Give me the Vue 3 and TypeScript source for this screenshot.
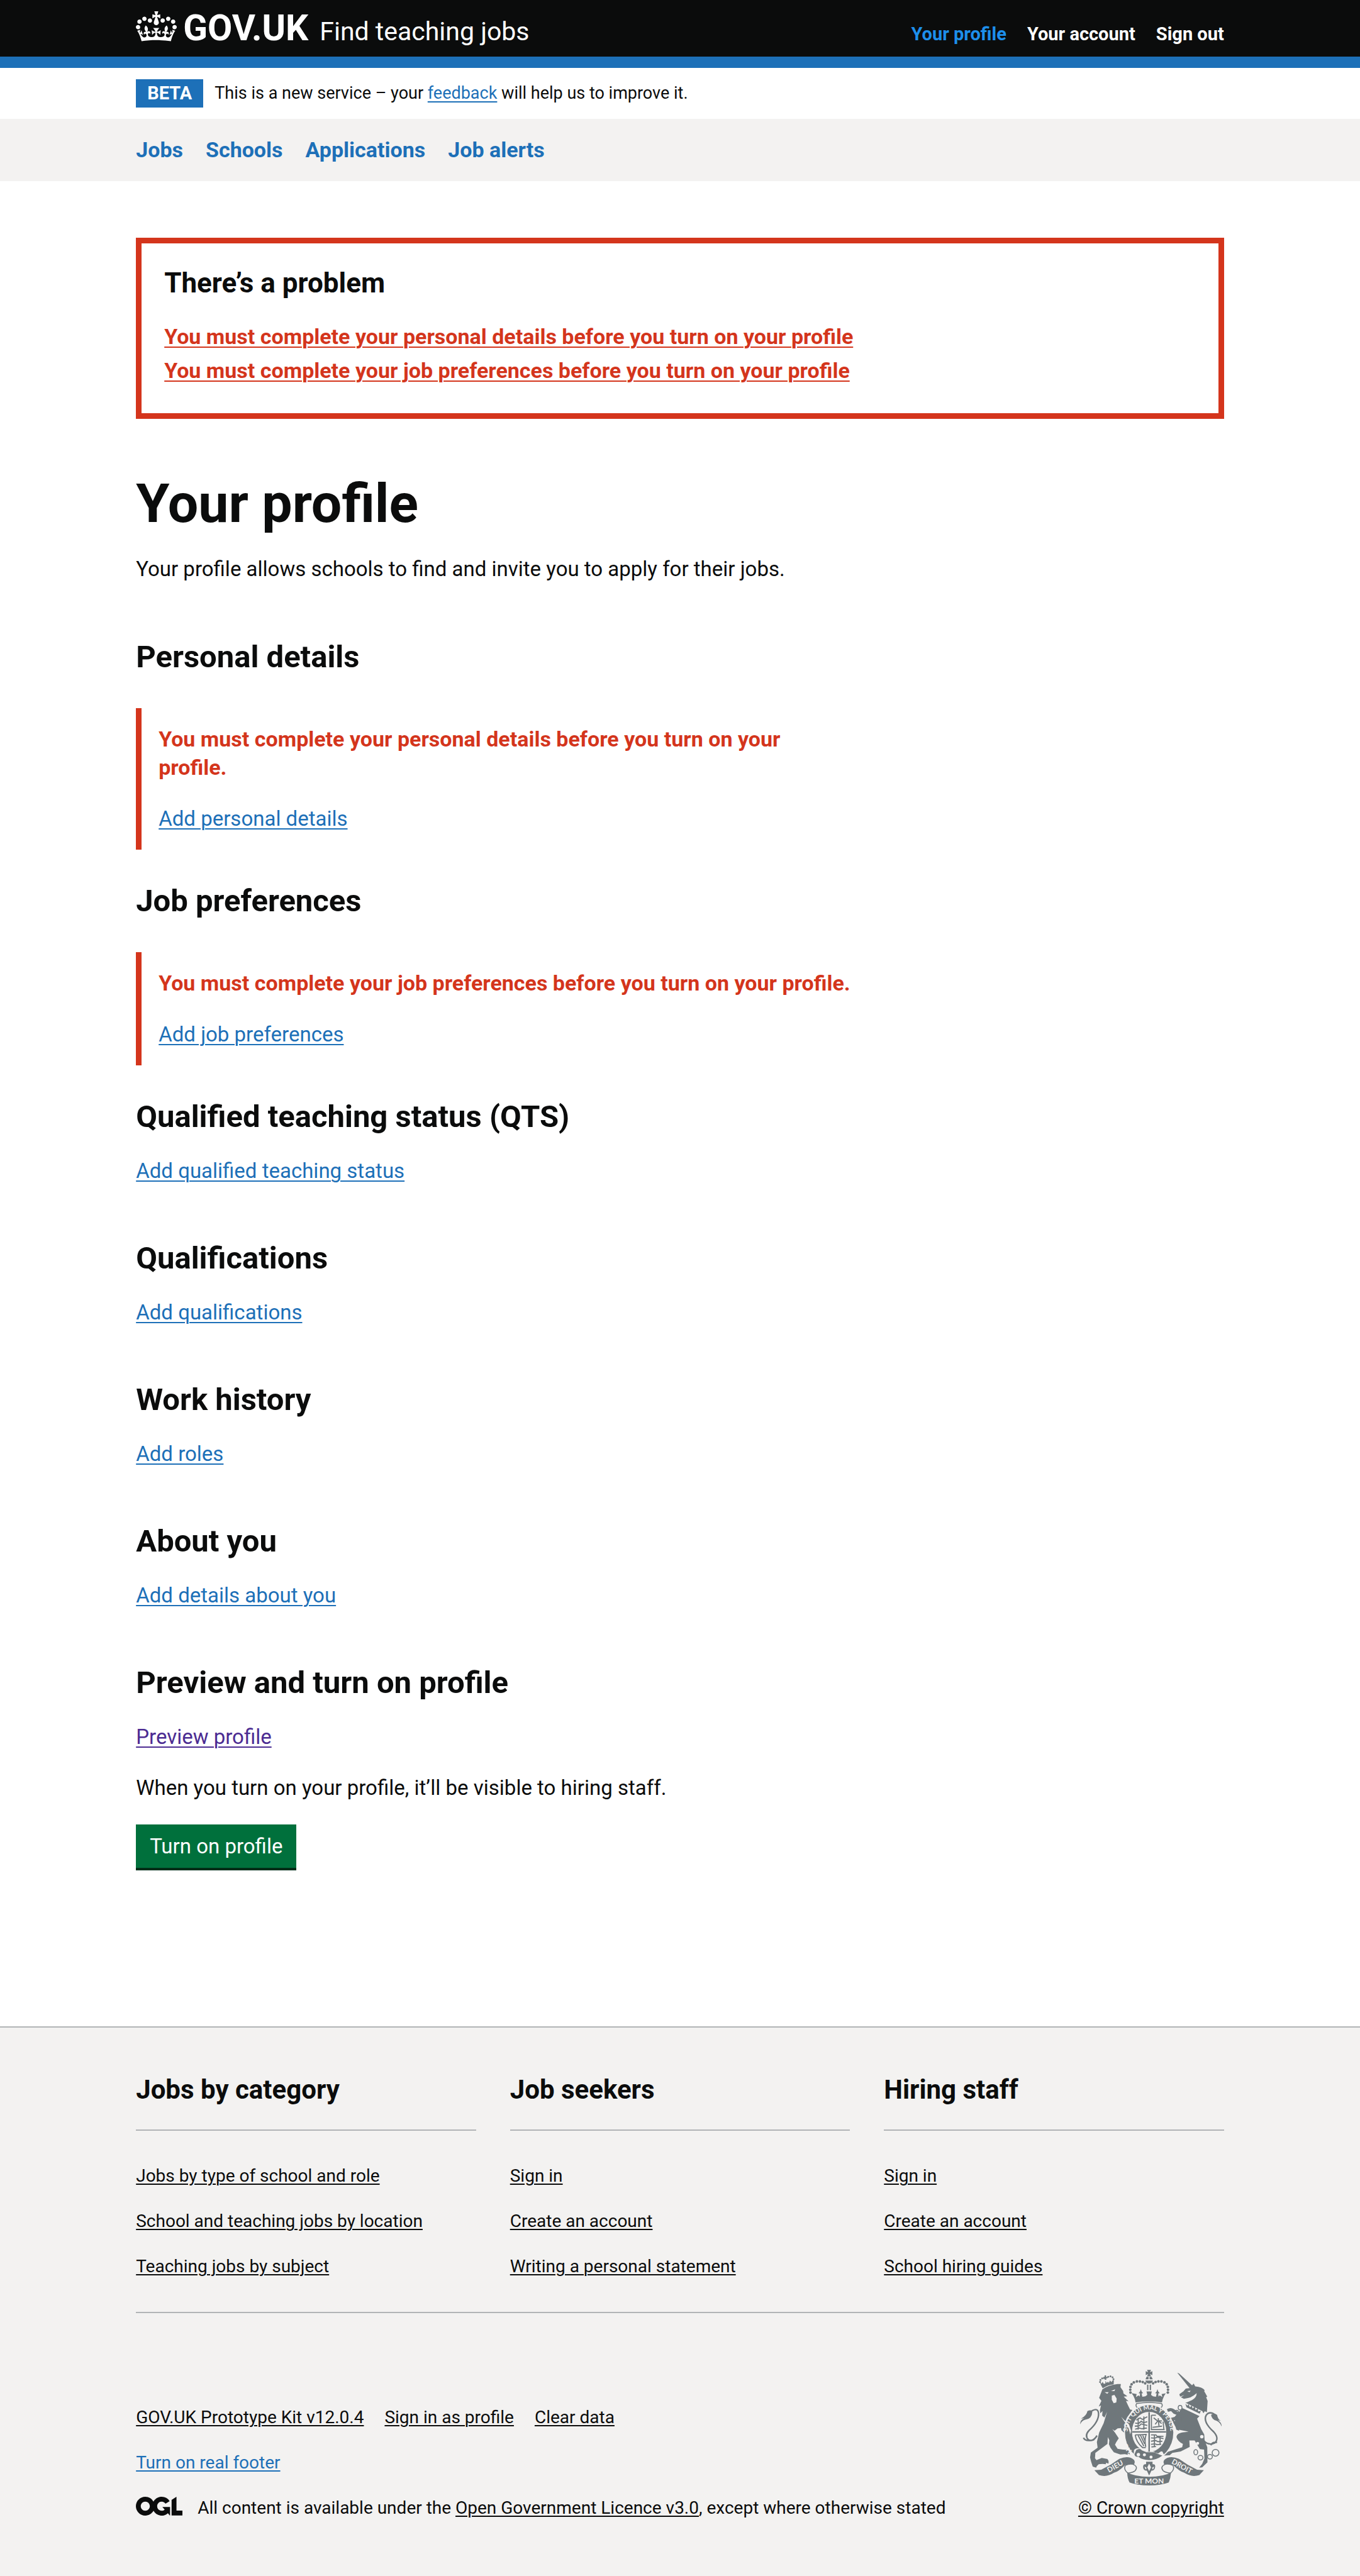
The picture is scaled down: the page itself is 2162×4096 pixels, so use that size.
<script setup lang="ts">
interface Link {
  label: string
  href: string
}

interface Section {
  title: string
  link: Link
  error?: string
}

const accountLinks: Link[] = [
  { label: 'Your profile', href: '#profile' },
  { label: 'Your account', href: '#account' },
  { label: 'Sign out', href: '#sign-out' },
]

const navLinks: Link[] = [
  { label: 'Jobs', href: '#jobs' },
  { label: 'Schools', href: '#schools' },
  { label: 'Applications', href: '#applications' },
  { label: 'Job alerts', href: '#alerts' },
]

const errors: Link[] = [
  { label: 'You must complete your personal details before you turn on your profile', href: '#personal-details' },
  { label: 'You must complete your job preferences before you turn on your profile', href: '#job-preferences' },
]

const sections: Section[] = [
  {
    title: 'Personal details',
    error: 'You must complete your personal details before you turn on your profile.',
    link: { label: 'Add personal details', href: '#personal-details' },
  },
  {
    title: 'Job preferences',
    error: 'You must complete your job preferences before you turn on your profile.',
    link: { label: 'Add job preferences', href: '#job-preferences' },
  },
  { title: 'Qualified teaching status (QTS)', link: { label: 'Add qualified teaching status', href: '#qts' } },
  { title: 'Qualifications', link: { label: 'Add qualifications', href: '#qualifications' } },
  { title: 'Work history', link: { label: 'Add roles', href: '#roles' } },
  { title: 'About you', link: { label: 'Add details about you', href: '#about' } },
]

const footerColumns: { title: string; links: string[] }[] = [
  {
    title: 'Jobs by category',
    links: ['Jobs by type of school and role', 'School and teaching jobs by location', 'Teaching jobs by subject'],
  },
  { title: 'Job seekers', links: ['Sign in', 'Create an account', 'Writing a personal statement'] },
  { title: 'Hiring staff', links: ['Sign in', 'Create an account', 'School hiring guides'] },
]

const metaLinks: string[] = ['GOV.UK Prototype Kit v12.0.4', 'Sign in as profile', 'Clear data']

// Pearls on the left arch of the royal crown; the right arch mirrors them.
const pearls: [number, number][] = [
  [399, 216], [398, 201], [399, 186], [405, 172], [417, 162], [433, 157], [449, 157], [464, 160], [477, 167],
]
</script>

<template>
  <div class="page">
    <header class="header">
      <div class="container header-row">
        <a class="brand" href="#home">
          <svg class="crown" viewBox="0 0 132 97" aria-hidden="true">
            <path fill="currentColor" fill-rule="evenodd" d="M25 30.2c3.5 1.5 7.7-.2 9.1-3.7 1.5-3.6-.2-7.8-3.9-9.2-3.6-1.4-7.6.3-9.1 3.9-1.4 3.5.3 7.5 3.9 9zM9 39.5c3.6 1.5 7.8-.2 9.2-3.7 1.5-3.6-.2-7.8-3.9-9.1-3.6-1.5-7.6.2-9.1 3.8-1.4 3.5.3 7.5 3.8 9zM4.4 57.2c3.5 1.5 7.7-.2 9.1-3.8 1.5-3.6-.2-7.7-3.9-9.1-3.5-1.5-7.6.3-9.1 3.8-1.4 3.5.3 7.6 3.9 9.1zm38.3-21.4c3.5 1.5 7.7-.2 9.1-3.8 1.5-3.6-.2-7.7-3.9-9.1-3.6-1.5-7.6.3-9.1 3.8-1.3 3.6.4 7.7 3.9 9.1zm64.4-5.6c-3.6 1.5-7.8-.2-9.1-3.7-1.5-3.6.2-7.8 3.8-9.2 3.6-1.4 7.7.3 9.2 3.9 1.3 3.5-.4 7.5-3.9 9zm15.9 9.3c-3.6 1.5-7.7-.2-9.1-3.7-1.5-3.6.2-7.8 3.7-9.1 3.6-1.5 7.7.2 9.2 3.8 1.5 3.5-.3 7.5-3.8 9zm4.7 17.7c-3.6 1.5-7.8-.2-9.2-3.8-1.5-3.6.2-7.7 3.9-9.1 3.6-1.5 7.7.3 9.2 3.8 1.3 3.5-.4 7.6-3.9 9.1zM89.3 35.8c-3.6 1.5-7.8-.2-9.2-3.8-1.4-3.6.2-7.7 3.9-9.1 3.6-1.5 7.7.3 9.2 3.8 1.4 3.6-.3 7.7-3.9 9.1zM69.7 17.7l8.9 4.7V9.3l-8.9 2.8c-.2-.3-.5-.6-.9-.9L72.4 0H59.6l3.5 11.2c-.3.3-.6.5-.9.9l-8.8-2.8v13.1l8.8-4.7c.3.3.6.7.9.9l-5 15.4v.1c-.2.8-.4 1.6-.4 2.4 0 4.1 3.1 7.5 7 8.1h.2c.3 0 .7.1 1 .1.4 0 .7 0 1-.1h.2c4-.6 7.1-4.1 7.1-8.1 0-.8-.1-1.7-.4-2.4V34l-5.1-15.4c.4-.2.7-.6 1-.9zM66 92.8c16.9 0 32.8 1.1 47.1 3.2 4-16.9 8.9-26.7 14-33.5l-9.6-3.4c1 4.9 1.1 7.2 0 10.2-1.5-1.4-3-4.3-4.2-8.7L108.6 76c2.8-2 5-3.2 7.5-3.3-4.4 9.4-10 11.9-13.6 11.2-4.3-.8-6.3-4.6-5.6-7.9 1-4.7 5.7-5.9 8-.5 4.3-8.7-3-11.4-7.6-8.8 7.1-7.2 7.9-13.5 2.1-21.1-8 6.1-8.1 12.3-4.5 20.8-4.7-5.4-12.1-2.5-9.5 6.2 3.4-5.2 7.9-2 7.2 3.1-.6 4.3-6.4 7.8-13.5 7.2-10.3-.9-10.9-8-11.2-13.8 2.5-.5 7.1 1.8 11 7.3L80.2 60c-4.1 4.4-8 5.3-12.3 5.4 1.4-4.4 8-11.6 8-11.6H55.5s6.4 7.2 7.9 11.6c-4.2-.1-8-1-12.3-5.4l1.4 16.4c3.9-5.5 8.5-7.7 10.9-7.3-.3 5.8-.9 12.8-11.1 13.8-7.2.6-12.9-2.9-13.5-7.2-.7-5 3.8-8.3 7.1-3.1 2.7-8.7-4.6-11.6-9.4-6.2 3.7-8.5 3.6-14.7-4.6-20.8-5.8 7.6-5 13.9 2.2 21.1-4.7-2.6-11.9.1-7.7 8.8 2.3-5.5 7.1-4.2 8.1.5.7 3.3-1.3 7.1-5.7 7.9-3.5.7-9-1.8-13.5-11.2 2.5.1 4.7 1.3 7.5 3.3l-4.7-15.4c-1.2 4.4-2.7 7.2-4.3 8.7-1.1-3-.9-5.3 0-10.2l-9.5 3.4c5 6.9 9.9 16.7 14 33.5 14.8-2.1 30.8-3.2 47.7-3.2z" />
          </svg>
          <span class="brand-name">GOV.UK</span>
        </a>
        <a class="service" href="#service">Find teaching jobs</a>
        <nav class="account" aria-label="Account">
          <a v-for="(item, i) in accountLinks" :key="item.label" :href="item.href" :class="{ current: i === 0 }">{{ item.label }}</a>
        </nav>
      </div>
    </header>

    <div class="container phase">
      <strong class="tag">BETA</strong>
      <span>This is a new service – your <a class="link" href="#feedback">feedback</a> will help us to improve it.</span>
    </div>

    <nav class="navbar" aria-label="Service">
      <div class="container nav-row">
        <a v-for="item in navLinks" :key="item.label" :href="item.href">{{ item.label }}</a>
      </div>
    </nav>

    <main class="container main">
      <div class="summary" role="alert">
        <h2>There’s a problem</h2>
        <ul>
          <li v-for="item in errors" :key="item.label"><a class="link" :href="item.href">{{ item.label }}</a></li>
        </ul>
      </div>

      <div class="column">
        <h1>Your profile</h1>
        <p class="lead">Your profile allows schools to find and invite you to apply for their jobs.</p>

        <section v-for="s in sections" :key="s.title" :class="{ invalid: s.error }">
          <h2>{{ s.title }}</h2>
          <div class="body">
            <p v-if="s.error" class="error">{{ s.error }}</p>
            <a class="link" :href="s.link.href">{{ s.link.label }}</a>
          </div>
        </section>

        <section>
          <h2>Preview and turn on profile</h2>
          <div class="body">
            <a class="link visited" href="#preview">Preview profile</a>
            <p>When you turn on your profile, it’ll be visible to hiring staff.</p>
            <button type="button">Turn on profile</button>
          </div>
        </section>
      </div>
    </main>

    <footer class="footer">
      <div class="container">
        <div class="footer-columns">
          <section v-for="col in footerColumns" :key="col.title">
            <h2>{{ col.title }}</h2>
            <ul>
              <li v-for="label in col.links" :key="label"><a class="link" href="#footer">{{ label }}</a></li>
            </ul>
          </section>
        </div>

        <div class="meta">
          <div class="meta-main">
            <div class="meta-links">
              <a v-for="label in metaLinks" :key="label" class="link" href="#meta">{{ label }}</a>
            </div>
            <a class="link toggle" href="#real-footer">Turn on real footer</a>
            <div class="licence">
              <svg class="ogl" viewBox="0 0 483.2 195.7" role="img" aria-label="Open Government Licence">
                <path fill="currentColor" d="M421.5 142.8V.1l-50.7 32.3v161.1h112.4v-50.7zm-122.3-9.6A47.12 47.12 0 0 1 221 97.8c0-26 21.1-47.1 47.1-47.1 16.7 0 31.4 8.7 39.7 21.8l42.7-27.2A97.63 97.63 0 0 0 268.1 0c-36.5 0-68.3 20.1-85.1 49.7A98 98 0 0 0 97.8 0C43.9 0 0 43.9 0 97.8s43.9 97.8 97.8 97.8c36.5 0 68.3-20.1 85.1-49.7a97.76 97.76 0 0 0 149.6 25.4l19.4 22.2h3v-87.8h-80l24.3 27.5zM97.8 145c-26 0-47.1-21.1-47.1-47.1s21.1-47.1 47.1-47.1 47.1 21.1 47.1 47.1S123.8 145 97.8 145" />
              </svg>
              <span>All content is available under the <a class="link" href="#ogl">Open Government Licence v3.0</a>, except where otherwise stated</span>
            </div>
          </div>

          <div class="copyright">
            <svg class="crest" viewBox="132 95 750 613" aria-hidden="true">
              <defs>
                <path id="motto-left" d="M413 527 A107 122 0 0 1 498 308" />
                <path id="motto-ring" d="M426 528 C370 470 370 385 424 336 C470 296 526 296 572 336 C624 385 626 470 568 530" />
              </defs>
              <g class="ink">
                <!-- royal crown -->
                <path d="M487 96h21l-5 12 12-6v22l-12-7 5 13h-21l5-13-12 7v-22l12 6zM484 132h11v14h-16zM500 132h11l6 14h-17zM478 152h40q-4 16-20 16t-20-16zM487 174h7v29h-7zM501 174h7v29h-7z" />
                <g v-for="([x, y], i) in pearls" :key="i">
                  <circle :cx="x" :cy="y" r="7" />
                  <circle :cx="996 - x" :cy="y" r="7" />
                </g>
                <path d="M410 220l22 4-4 16 14-9 6 6 2-16-8-2 8-9 4-13 4 13 8 9-8 2 4 17 16-2 10-8-4-18h28l-4 18 10 8 16 2 4-17-8-2 8-9 4-13 4 13 8 9-8 2 2 16 6-6 14 9-4-16 22-4q-15 20-20 48-70-9-140 0-4-28-21-48z" />
                <path fill="none" stroke="currentColor" stroke-width="5" d="M432 274q66-12 132 0 8 10-2 22h-128q-10-12-2-22z" />

                <!-- lion -->
                <circle v-for="(p, i) in [[238,160],[240,149],[249,141],[259,139],[281,132],[293,130],[304,135],[309,145]]" :key="'c' + i" :cx="p[0]" :cy="p[1]" r="5" />
                <path d="M262 125h8v8h8v7h-7v8h-8v-8h-8v-7h7z" />
                <path d="M238 163l9 5 4-9 7 11 8-2 1-14 6 11 7-7 5 7 5-13 9 9 4-9 8-2-1 22q-32 3-58 21-8-12-14-30z" />
                <path d="M250 199q30-22 80-28l18 0-2 16 14 20 2 14 21 15-20 1 26 25-14-2 12 26 10 20 12 2-28 40-8 20 18 24 12 28 4 30-12 6-10-8-10-4 2-26-12 10-14-12-2-12-18 2-16 12-12-8 14 18 20 30-14 22-6 12 14 22 28 4 28 2 10 24-14-6 2 8-16-4-24 2-34-12-18-24-8-18 2-22-8-16-2 36-64 48-2 28 8 10 28-12 30 6 6 10 0 14-14-4 0 8-18-2-20 2-10 10-4 8-18-6-8-24-6-24 4-26 36-26-4-30 12-50 24-50 18-60-14 30-12-10 2-24-12 12-2-16 6-26-12 6 14-30-12-16z" />
                <path fill="none" stroke="currentColor" stroke-width="8" d="M176 326Q226 286 230 326Q232 370 180 416Q154 444 176 466Q200 480 222 444M150 456Q160 478 206 466" />
                <path d="M133 384q-2-22 20-32l-16 2q30-16 34-40 22-10 26 4-2 38-38 42-18 4-26 24z" />

                <!-- unicorn -->
                <path d="M647 111l10 4 72 66-16 12z" />
                <path d="M712 192l22-24 8 15q38 4 50 20l-2 6 16 28-6 4 8 20-4 60q-8-8-14-4l-2 8-18-14-82-40q14-4 26-10 36-14 36-42-24 22-46 26l-22 4-16-8 18-12-22 8-4-12 22-16 12-14z" />
                <path d="M674 298l92 42-14 14 22 56 16 28 2 30 14 38 1 80-28 26-16 2 16-20 12-28-2-48-22-2-28-46-28 0 2 34-48 24-44 8-14 12-34 2 24-20 76-24 4-18q-28-14-34-36 2-24 46-26l18-3-50-10-22-34-1-36z" />
                <path d="M592 304q20-12 38 0l22 16-4 16-20-8-14-14-16 4zM606 352l30-8 36 4-2 14-40 0 14 20 16 22-4 14-14-6-4-14-18-34z" />
                <path fill="none" stroke="currentColor" stroke-width="8" d="M848 334Q818 312 800 336Q782 372 840 424Q872 460 844 484Q812 498 786 470M858 480Q830 476 826 496" />
                <path d="M882 396q2-20-20-34l16 4q-16-8-20-32-16-12-32 0 4 26 30 32 18 8 26 30z" />
                <g fill="none" stroke="currentColor" stroke-width="5">
                  <ellipse cx="662" cy="296" rx="10" ry="12" />
                  <ellipse cx="645" cy="320" rx="8" ry="10" />
                  <ellipse cx="745" cy="532" rx="10" ry="14" />
                  <ellipse cx="770" cy="561" rx="13" ry="12" />
                  <ellipse cx="820" cy="556" rx="13" ry="12" />
                  <circle cx="850" cy="535" r="18" />
                </g>

                <!-- garter -->
                <ellipse class="cut" cx="498" cy="428" rx="134" ry="151" />
                <ellipse cx="498" cy="428" rx="128" ry="146" />
                <ellipse class="cut" cx="498" cy="424" rx="91" ry="106" />
                <path d="M494 320h8v210h-8zM408 421h180v7h-180z" />
                <g fill="none" stroke="currentColor" stroke-width="6">
                  <path d="M430 362l20-12 12 8 26-14M424 378l18 2 14-12 12 8 20-6M422 394l24-2 10-10 32 8M424 410l20-6 14 4 28-4M440 350v62M470 342v70" />
                  <path d="M510 336v76h70M510 336h24M516 400l50-6M522 350l20 16 24 0M530 384l16-20 18 16M546 352l4 40M576 410l-4-40" />
                  <path d="M424 440q30 0 58-2-10 30-2 66M424 440q6 40 40 68h16M440 444l30 56M452 442l22 46M464 442l12 30" />
                  <path d="M508 440h26l6 8h34M508 456l20 2 14-6 32 8M508 474l24-4 12 6 24-2M508 490l20-2 12 4 22-2M510 504l24-2M526 440v66M556 448v46" />
                </g>
                <path class="cut" d="M418 520q14-16 40-4 20 16 42 14 40-4 68-2l10 20q-30 36-80 36-56-2-82-38z" />
                <path d="M430 520q18-12 30 2l24 10h40q30 12 44 18-30 24-70 24-36 0-58-18-18 2-20-14z" />
                <circle class="cut" cx="441" cy="545" r="9" />
                <circle class="cut" cx="473" cy="546" r="8" />
                <circle class="cut" cx="508" cy="558" r="8" />
                <path d="M522 532l44-24 8 10-28 20zM482 582h34v14q16-2 14 14-2 20-20 20l-12 26-12-26q-20 0-20-20 0-16 16-14z" />
                <path class="cut" d="M498 592l10 20-10 20-10-20zM474 608l10 6-2 10q-8-6-8-16zM524 608l-10 6 2 10q8-6 8-16z" />
                <path class="cut" d="M350 345l42 42 10 30-4 20-8-30-18-30z" />

                <!-- ribbon -->
                <path d="M208 627l36-2q50-24 96-58 50-20 78 6 8 14-2 26l-44 0q-36 36-60 42-40 26-80 12z" />
                <path d="M788 627l-36-2q-50-24-96-58-50-20-78 6-8 14 2 26l44 0q36 36 60 42 40 26 80 12z" />
                <path class="cut" stroke="currentColor" stroke-width="5" d="M372 602q20-10 40-6 30 12 12 34-16 12-40 12-24-20-12-40zM624 602q-20-10-40-6-30 12-12 34 16 12 40 12 24-20 12-40z" />
                <path d="M382 640q40 22 116 22t116-22q-2 30-12 52-40 16-104 16t-104-16q-12-22-12-52z" />

                <!-- faces and chain -->
                <path class="cut" d="M262 214l22 0-8 8zM296 208l22-10-4 10zM300 232l14-4 12 20-2 20-14 4-10-18zM700 208l18-2-6 8z" />
                <path class="cut" d="M688 268l94 48-14 26-84-42z" />
                <path d="M690 276l12 10 4-10 8 18 10-10 4 16 12-10 4 18 12-8 2 16 14-4-6 16-70-34z" />
                <circle class="cut" cx="785" cy="405" r="10" />
                <circle class="cut" cx="777" cy="450" r="9" />
                <circle class="cut" cx="755" cy="485" r="8" />
              </g>
              <g class="motto">
                <text font-size="33"><textPath href="#motto-left" startOffset="6">HON</textPath></text>
                <text font-size="33"><textPath href="#motto-ring" startOffset="116">SOIT QUI MAL Y PENSE</textPath></text>
                <text x="318" y="620" font-size="38" text-anchor="middle" transform="rotate(-29 318 607)">DIEU</text>
                <text x="498" y="698" font-size="40" text-anchor="middle">ET MON</text>
                <text x="672" y="620" font-size="38" text-anchor="middle" transform="rotate(29 672 607)">DROIT</text>
              </g>
            </svg>
            <a class="link" href="#copyright">© Crown copyright</a>
          </div>
        </div>
      </div>
    </footer>
  </div>
</template>

<style>
body {
  margin: 0;
}
</style>

<style scoped>
.page {
  display: flex;
  flex-direction: column;
  min-height: 100vh;
  background: #fff;
  color: #0b0c0c;
  font-family: Roboto, 'Liberation Sans', sans-serif;
  font-size: 33px;
  line-height: 45px;
}

h1,
h2,
p,
ul {
  margin: 0;
  padding: 0;
}

ul {
  list-style: none;
}

.container {
  box-sizing: border-box;
  width: 80%;
  margin: 0 auto;
}

.link {
  color: #1d70b8;
  text-decoration: underline;
  text-decoration-thickness: 2px;
  text-underline-offset: 4px;
}

/* Header */
.header {
  background: #0b0c0c;
  color: #fff;
  border-bottom: 18px solid #1d70b8;
}

.header a {
  color: inherit;
  text-decoration: none;
}

.header-row {
  display: flex;
  align-items: baseline;
  height: 90px;
  padding-top: 18px;
  line-height: 54px;
}

.brand {
  display: flex;
  align-items: baseline;
  gap: 10px;
}

.crown {
  align-self: flex-start;
  width: 65px;
  height: 48px;
}

.brand-name {
  font-size: 57px;
  font-weight: 700;
}

.service {
  margin-left: 18px;
  font-size: 41px;
}

.account {
  display: flex;
  gap: 33px;
  margin-left: auto;
  font-size: 29px;
  font-weight: 700;
}

.header .current {
  color: #1d8feb;
}

/* Phase banner */
.phase {
  display: flex;
  align-items: center;
  gap: 18px;
  padding: 18px 0;
  font-size: 27px;
}

.tag {
  padding: 0 18px;
  background: #1d70b8;
  color: #fff;
  font-size: 29px;
}

/* Service navigation */
.navbar {
  background: #f3f2f1;
}

.nav-row {
  display: flex;
  gap: 36px;
  padding: 27px 0;
  font-size: 34px;
  font-weight: 700;
}

.nav-row a {
  color: #1d70b8;
  text-decoration: none;
}

/* Main content */
.main {
  flex: 1;
  padding: 90px 0;
}

.summary {
  padding: 36px;
  border: 9px solid #d4351c;
  font-size: 34px;
  font-weight: 700;
}

.summary h2 {
  margin-bottom: 36px;
  font-size: 44px;
  line-height: 54px;
}

.summary li {
  margin-bottom: 9px;
}

.summary .link {
  color: #d4351c;
}

.column {
  max-width: 1138px;
}

h1 {
  margin: 90px 0 36px;
  font-size: 86px;
  line-height: 90px;
}

.lead {
  margin-bottom: 91px;
}

.column section {
  margin-bottom: 90px;
}

.column h2 {
  margin-bottom: 36px;
  font-size: 49px;
  line-height: 54px;
}

.body {
  display: flex;
  flex-direction: column;
  align-items: flex-start;
  gap: 36px;
}

.column .invalid {
  margin-bottom: 55px;
}

.invalid h2 {
  margin-bottom: 54px;
}

.invalid .body {
  padding: 27px 0 27px 27px;
  border-left: 9px solid #d4351c;
}

.error {
  color: #d4351c;
  font-size: 34px;
  font-weight: 700;
}

.visited {
  color: #4c2c92;
}

button {
  padding: 12px 22px;
  border: 0;
  box-shadow: 0 4px 0 #002d18;
  background: #00703c;
  color: #fff;
  font: inherit;
}

/* Footer */
.footer {
  padding: 72px 0 90px;
  border-top: 2px solid #b1b4b6;
  background: #f3f2f1;
  font-size: 28px;
  line-height: 36px;
}

.footer .link {
  color: #0b0c0c;
  text-underline-offset: 3px;
}

.footer-columns {
  display: grid;
  grid-template-columns: repeat(3, 1fr);
  gap: 54px;
  padding-bottom: 54px;
  border-bottom: 2px solid #b1b4b6;
}

.footer h2 {
  margin-bottom: 54px;
  padding-bottom: 36px;
  border-bottom: 2px solid #b1b4b6;
  font-size: 42px;
  line-height: 54px;
}

.footer ul {
  display: flex;
  flex-direction: column;
  gap: 36px;
}

.meta {
  display: flex;
  justify-content: space-between;
  align-items: flex-end;
  margin-top: 90px;
}

.meta-main {
  display: flex;
  flex-direction: column;
  align-items: flex-start;
  gap: 36px;
}

.meta-links {
  display: flex;
  gap: 33px;
}

.footer .toggle {
  color: #1d70b8;
}

.licence {
  display: flex;
  gap: 24px;
}

.ogl {
  width: 74px;
  height: 30px;
}

.copyright {
  display: flex;
  flex-direction: column;
  align-items: center;
  gap: 18px;
}

.crest {
  width: 225px;
  height: 184px;
  color: #6f777b;
}

.ink {
  fill: currentColor;
}

.cut,
.motto {
  fill: #f3f2f1;
}

.motto {
  font-family: Lato, sans-serif;
  font-weight: 700;
}
</style>
